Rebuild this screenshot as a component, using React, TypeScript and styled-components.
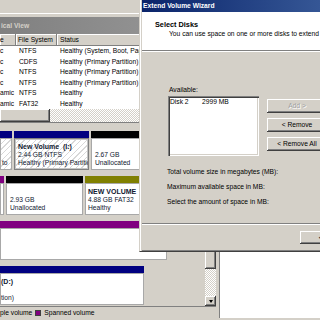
import React from 'react'
import styled, { createGlobalStyle } from 'styled-components'

const face = '#d4d0c8'

const GlobalStyle = createGlobalStyle`
  html, body {
    margin: 0;
    padding: 0;
    background: #fff;
  }
  body {
    font-family: 'Liberation Sans', Arial, sans-serif;
    font-size: 6.7px;
    color: #000;
  }
  * { box-sizing: border-box; }
`

const raised = `
  background: ${face};
  box-shadow: inset -1px -1px #404040, inset 1px 1px #fff, inset -2px -2px #808080;
`

const checker = `
  background: repeating-conic-gradient(#fff 0 25%, ${face} 0 50%) 0 0 / 2px 2px;
`

const Desktop = styled.div`
  position: relative;
  width: 320px;
  height: 320px;
  overflow: hidden;
  display: flex;
  flex-direction: column;
  background: #fff;
`

const MainRow = styled.div`
  display: flex;
  height: 318px;
`

const DiskWindow = styled.div`
  width: 220px;
  flex-shrink: 0;
  display: flex;
  flex-direction: column;
  background: ${face};
  padding-right: 3px;
  border-right: 1px solid #808080;
`

const Toolbar = styled.div`
  height: 14px;
  border-bottom: 1px solid #fff;
  margin-bottom: 3px;
`

const ChildTitle = styled.div`
  height: 17px;
  line-height: 17px;
  padding-left: 1px;
  background: linear-gradient(90deg, #808080, #9a9a9a);
  color: ${face};
  font-weight: bold;
  white-space: nowrap;
`

const ListPane = styled.div`
  background: #fff;
  border-bottom: 1px solid #808080;
`

const ListHeader = styled.div`
  display: flex;
  height: 12px;
  background: ${face};
`

const HeaderCell = styled.div<{ $w: number; $pad: number }>`
  width: ${p => p.$w}px;
  flex-shrink: 0;
  padding-left: ${p => p.$pad}px;
  line-height: 12px;
  white-space: nowrap;
  overflow: hidden;
  box-shadow: inset -1px -1px #808080, inset 1px 1px #fff;
`

const ListRow = styled.div`
  display: flex;
  height: 10.5px;
`

const Cell = styled.div<{ $w: number; $pad: number }>`
  width: ${p => p.$w}px;
  flex-shrink: 0;
  padding-left: ${p => p.$pad}px;
  line-height: 10.5px;
  white-space: nowrap;
  overflow: hidden;
`

const HScroll = styled.div`
  display: flex;
  height: 13px;
  ${checker}
`

const HThumb = styled.div`
  width: 50px;
  ${raised}
`

const Splitter = styled.div`
  height: 7px;
`

const GraphArea = styled.div`
  flex: 1;
  display: flex;
  min-height: 0;
`

const DiskArea = styled.div`
  flex: 1;
  padding-top: 1px;
  display: flex;
  flex-direction: column;
  gap: 6px;
  overflow: hidden;
`

const DiskRow = styled.div`
  display: flex;
  gap: 2px;
  height: 39px;
  flex-shrink: 0;
`

const Partition = styled.div<{ $w: number }>`
  width: ${p => p.$w}px;
  flex-shrink: 0;
  display: flex;
  flex-direction: column;
`

const Bar = styled.div<{ $color: string }>`
  height: 7px;
  background: ${p => p.$color};
`

const VolBox = styled.div<{ $pad: number; $hatched?: boolean; $selected?: boolean }>`
  flex: 1;
  padding: 4px 0 0 ${p => p.$pad}px;
  overflow: hidden;
  white-space: pre;
  color: #101830;
  border: 1px solid ${p => (p.$selected ? '#808080' : '#a8a8a8')};
  box-shadow: ${p => (p.$selected ? 'inset 0 0 0 1px #c4c4c4' : 'none')};
  background: ${p =>
    p.$hatched
      ? 'repeating-linear-gradient(135deg, #fff 0 3px, #d8d8d8 3px 4px)'
      : '#fff'};
`

const BoxLine = styled.div<{ $bold?: boolean }>`
  height: 8px;
  line-height: 8px;
  font-weight: ${p => (p.$bold ? 'bold' : 'normal')};
  font-size: ${p => (p.$bold ? '7px' : '6.7px')};
`

const VScroll = styled.div`
  width: 11px;
  flex-shrink: 0;
  display: flex;
  flex-direction: column;
`

const ScrollBtn = styled.div<{ $h: number; $up?: boolean }>`
  height: ${p => p.$h}px;
  display: flex;
  align-items: center;
  justify-content: center;
  ${raised}

  &::after {
    content: '';
    border-left: 2.5px solid transparent;
    border-right: 2.5px solid transparent;
    ${p => (p.$up ? 'border-bottom' : 'border-top')}: 3px solid #000;
  }
`

const VThumb = styled.div`
  height: 128px;
  ${raised}
`

const VTrack = styled.div`
  flex: 1;
  ${checker}
`

const Legend = styled.div`
  height: 12px;
  border-top: 1px solid #808080;
  display: flex;
  align-items: center;
  white-space: nowrap;
`

const Swatch = styled.span<{ $color: string }>`
  width: 6px;
  height: 6px;
  margin: 0 3px 0 3px;
  background: ${p => p.$color};
  border: 1px solid #404040;
`

const WhiteArea = styled.div`
  flex: 1;
  background: #fff;
`

const BottomStrip = styled.div`
  height: 2px;
  background: ${face};
`

/* wizard */

const Wizard = styled.div`
  position: absolute;
  left: 139px;
  top: 0;
  width: 200px;
  height: 252px;
  display: flex;
  flex-direction: column;
  padding-left: 2px;
  border-left: 1px solid ${face};
  border-bottom: 1px solid #404040;
  background: linear-gradient(90deg, #fff 0 1px, ${face} 1px);
`

const WizTitle = styled.div`
  height: 12px;
  line-height: 12px;
  padding-left: 1px;
  color: #fff;
  font-weight: bold;
  white-space: nowrap;
  background: linear-gradient(90deg, #0a246a, #3a5c9a);
`

const WizHeader = styled.div`
  height: 38px;
  background: #fff;
  padding: 8px 0 0 13px;
  white-space: nowrap;
`

const HeaderTitle = styled.div`
  font-weight: bold;
  font-size: 7.3px;
  line-height: 9px;
`

const HeaderSub = styled.div`
  padding-left: 14px;
  line-height: 9px;
`

const Etched = styled.div`
  height: 2px;
  border-top: 1px solid #808080;
  border-bottom: 1px solid #fff;
`

const WizBody = styled.div`
  height: 171px;
  padding: 34px 0 0 26px;
  white-space: nowrap;
`

const Pickers = styled.div`
  display: flex;
  gap: 8px;
`

const ListColumn = styled.div`
  width: 91px;
  display: flex;
  flex-direction: column;
`

const FieldLabel = styled.div`
  line-height: 8px;
  padding-left: 1px;
`

const ListBox = styled.div`
  margin-top: 2px;
  height: 60px;
  padding: 2px 2px;
  background: #fff;
  box-shadow: inset 1px 1px #808080, inset 2px 2px #404040, inset -1px -1px #fff, inset -2px -2px ${face};
`

const ListItem = styled.div`
  display: grid;
  grid-template-columns: 32px auto;
  line-height: 7px;
`

const ButtonColumn = styled.div`
  padding-top: 13px;
  display: flex;
  flex-direction: column;
  gap: 5px;
`

const Button = styled.div<{ $w?: number; $disabled?: boolean }>`
  width: ${p => p.$w ?? 60}px;
  height: 14px;
  line-height: 14px;
  text-align: center;
  ${raised}
  color: ${p => (p.$disabled ? '#a0a0a0' : '#000')};
  text-shadow: ${p => (p.$disabled ? '1px 1px #fff' : 'none')};
`

const LabelStack = styled.div`
  margin: 8px 0 0 -1px;
`

const InfoLabel = styled.div`
  height: 15px;
  line-height: 15px;
`

const WizFooter = styled.div`
  height: 26px;
  padding: 6px 0 0 158px;
  border-bottom: 1px solid #808080;
`

const BackButton = styled(Button)`
  height: 13px;
  line-height: 13px;
`

type Vol = { type: string; fs: string; status: string }

const volumes: Vol[] = [
  { type: 'c', fs: 'NTFS', status: 'Healthy (System, Boot, Pagefile)' },
  { type: 'c', fs: 'CDFS', status: 'Healthy (Primary Partition)' },
  { type: 'c', fs: 'NTFS', status: 'Healthy (Primary Partition)' },
  { type: 'c', fs: 'NTFS', status: 'Healthy (Primary Partition)' },
  { type: 'amic', fs: 'NTFS', status: 'Healthy' },
  { type: 'amic', fs: 'FAT32', status: 'Healthy' }
]

type Part = {
  w: number
  color: string
  pad: number
  lines: string[]
  hatched?: boolean
  selected?: boolean
}

const disks: Part[][] = [
  [
    { w: 12, color: '#000080', pad: 1, lines: ['', '', 'to'], hatched: true },
    {
      w: 75,
      color: '#000080',
      pad: 3,
      lines: ['New Volume  (I:)', '2.44 GB NTFS', 'Healthy (Primary Partition)'],
      hatched: true,
      selected: true
    },
    { w: 114, color: '#000', pad: 3, lines: ['', '2.67 GB', 'Unallocated'] }
  ],
  [
    { w: 4, color: '#800080', pad: 0, lines: ['', '', ''] },
    { w: 77, color: '#000', pad: 3, lines: ['', '2.93 GB', 'Unallocated'] },
    { w: 118, color: '#808000', pad: 2, lines: ['NEW VOLUME  (J:)', '4.88 GB FAT32', 'Healthy'] }
  ],
  [{ w: 167, color: '#800080', pad: 2, lines: ['', '', ''] }],
  [{ w: 144, color: '#000080', pad: 0, lines: ['(D:)', '', 'tion)'] }]
]

export default function App () {
  return (
    <>
      <GlobalStyle />
      <Desktop>
        <MainRow>
          <DiskWindow>
            <Toolbar />
            <ChildTitle>ical View</ChildTitle>
            <ListPane>
              <ListHeader>
                <HeaderCell $w={16} $pad={0}>e</HeaderCell>
                <HeaderCell $w={41} $pad={2}>File System</HeaderCell>
                <HeaderCell $w={120} $pad={3}>Status</HeaderCell>
              </ListHeader>
              {volumes.map((v, i) => (
                <ListRow key={i}>
                  <Cell $w={16} $pad={0}>{v.type}</Cell>
                  <Cell $w={41} $pad={3}>{v.fs}</Cell>
                  <Cell $w={120} $pad={3}>{v.status}</Cell>
                </ListRow>
              ))}
              <HScroll>
                <HThumb />
              </HScroll>
            </ListPane>
            <Splitter />
            <GraphArea>
              <DiskArea>
                {disks.map((row, r) => (
                  <DiskRow key={r}>
                    {row.map((p, i) => (
                      <Partition key={i} $w={p.w}>
                        <Bar $color={p.color} />
                        <VolBox $pad={p.pad} $hatched={p.hatched} $selected={p.selected}>
                          {p.lines.map((l, j) => (
                            <BoxLine key={j} $bold={j === 0}>{l}</BoxLine>
                          ))}
                        </VolBox>
                      </Partition>
                    ))}
                  </DiskRow>
                ))}
              </DiskArea>
              <VScroll>
                <ScrollBtn $h={11} $up />
                <VThumb />
                <VTrack />
                <ScrollBtn $h={10} />
              </VScroll>
            </GraphArea>
            <Legend>
              ple volume
              <Swatch $color="#800080" />
              Spanned volume
            </Legend>
          </DiskWindow>
          <WhiteArea />
        </MainRow>
        <BottomStrip />

        <Wizard>
          <WizTitle>Extend Volume Wizard</WizTitle>
          <WizHeader>
            <HeaderTitle>Select Disks</HeaderTitle>
            <HeaderSub>You can use space on one or more disks to extend the volume.</HeaderSub>
          </WizHeader>
          <Etched />
          <WizBody>
            <Pickers>
              <ListColumn>
                <FieldLabel>Available:</FieldLabel>
                <ListBox>
                  <ListItem>
                    <span>Disk 2</span>
                    <span>2999 MB</span>
                  </ListItem>
                </ListBox>
              </ListColumn>
              <ButtonColumn>
                <Button $disabled>Add &gt;</Button>
                <Button>&lt; Remove</Button>
                <Button>&lt; Remove All</Button>
              </ButtonColumn>
            </Pickers>
            <LabelStack>
              <InfoLabel>Total volume size in megabytes (MB):</InfoLabel>
              <InfoLabel>Maximum available space in MB:</InfoLabel>
              <InfoLabel>Select the amount of space in MB:</InfoLabel>
            </LabelStack>
          </WizBody>
          <Etched />
          <WizFooter>
            <BackButton $w={58}>&lt; Back</BackButton>
          </WizFooter>
        </Wizard>
      </Desktop>
    </>
  )
}
